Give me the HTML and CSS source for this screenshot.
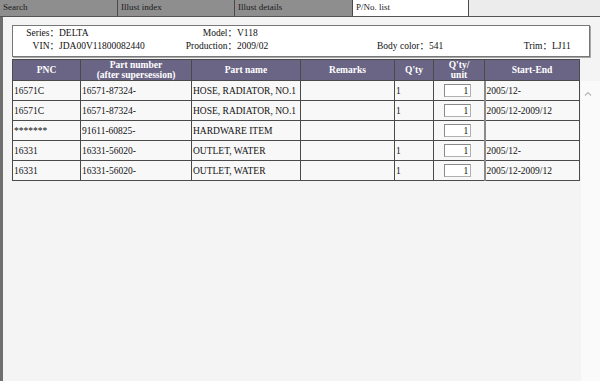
FILE: index.html
```html
<!DOCTYPE html>
<html lang="en">

<head>
    <meta charset="UTF-8">
    <meta name="viewport" content="width=device-width, initial-scale=1.0">
    <title>P/No. list</title>
    <link rel="stylesheet" href="styles.css">
</head>

<body>
    <!-- Tabs -->
    <div class="tabs">
        <div class="tab">Search</div>
        <div class="tab">Illust index</div>
        <div class="tab">Illust details</div>
        <div class="tab active">P/No. list</div>
        <div class="tab-rest"></div>
    </div>

    <div class="window">
        <!-- Vehicle info -->
        <div class="info">
            <span class="lbl">Series：</span><span class="val">DELTA</span>
            <span class="lbl">Model：</span><span class="val">V118</span>
            <span class="lbl"></span><span class="val"></span>
            <span class="lbl"></span><span class="val"></span>

            <span class="lbl">VIN：</span><span class="val">JDA00V11800082440</span>
            <span class="lbl">Production：</span><span class="val">2009/02</span>
            <span class="lbl">Body color：</span><span class="val">541</span>
            <span class="lbl">Trim：</span><span class="val">LJ11</span>
        </div>

        <!-- Parts list header -->
        <table class="parts parts-head">
            <colgroup>
                <col class="c-pnc"><col class="c-pno"><col class="c-name"><col class="c-rem">
                <col class="c-qty"><col class="c-unit"><col class="c-date">
            </colgroup>
            <thead>
                <tr>
                    <th>PNC</th>
                    <th>Part number<br>(after supersession)</th>
                    <th>Part name</th>
                    <th>Remarks</th>
                    <th>Q'ty</th>
                    <th>Q'ty/<br>unit</th>
                    <th>Start-End</th>
                </tr>
            </thead>
        </table>

        <!-- Parts list rows -->
        <div class="list-body">
            <table class="parts parts-rows">
                <colgroup>
                    <col class="c-pnc"><col class="c-pno"><col class="c-name"><col class="c-rem">
                    <col class="c-qty"><col class="c-unit"><col class="c-date">
                </colgroup>
                <tbody id="partsList">
                    <!-- filled by script below -->
                </tbody>
            </table>
            <div class="scrollbar">
                <svg class="arrow-up" width="8" height="5" viewBox="0 0 8 5">
                    <polyline points="1,4.5 4,1.5 7,4.5" fill="none" stroke="#b5b5b5" stroke-width="1.2"/>
                </svg>
            </div>
        </div>
    </div>

    <script>
        const parts = [
            { pnc: "16571C", pno: "16571-87324-", name: "HOSE, RADIATOR, NO.1", remarks: "", qty: "1", unit: "1", date: "2005/12-" },
            { pnc: "16571C", pno: "16571-87324-", name: "HOSE, RADIATOR, NO.1", remarks: "", qty: "1", unit: "1", date: "2005/12-2009/12" },
            { pnc: "*******", pno: "91611-60825-", name: "HARDWARE ITEM", remarks: "", qty: "", unit: "1", date: "" },
            { pnc: "16331", pno: "16331-56020-", name: "OUTLET, WATER", remarks: "", qty: "1", unit: "1", date: "2005/12-" },
            { pnc: "16331", pno: "16331-56020-", name: "OUTLET, WATER", remarks: "", qty: "1", unit: "1", date: "2005/12-2009/12" }
        ];

        const partsList = document.getElementById('partsList');

        parts.forEach(p => {
            const row = document.createElement('tr');
            row.innerHTML = `
                <td>${p.pnc}</td>
                <td>${p.pno}</td>
                <td>${p.name}</td>
                <td>${p.remarks}</td>
                <td>${p.qty}</td>
                <td class="unit"><input type="text" class="unit-input" value="${p.unit}"></td>
                <td>${p.date}</td>
            `;
            partsList.appendChild(row);
        });
    </script>
</body>

</html>
```

FILE: styles.css
```css
html,
body {
    margin: 0;
    height: 100%;
    overflow: hidden;
}

body {
    font-family: "Liberation Serif", "Noto Sans CJK SC", serif;
    font-size: 9.5px;
    color: #111;
    background-color: #f4f4f4;
    display: flex;
    flex-direction: column;
}

/* Tabs */
.tabs {
    display: flex;
    height: 17px;
    border-bottom: 1px solid #555;
    box-sizing: border-box;
    background-color: #ececec;
}

.tab {
    box-sizing: border-box;
    width: 117px;
    padding: 2px 0 0 3px;
    background-color: #8e8e8e;
    border-right: 1px solid #4a4a4a;
    font-size: 9px;
    color: #1a1a1a;
}

.tab:nth-child(1),
.tab:nth-child(3) {
    width: 118px;
}

.tab.active {
    width: 116px;
    background-color: #fff;
}

.tab-rest {
    flex: 1;
}

/* Window */
.window {
    flex: 1;
    display: flex;
    flex-direction: column;
    border-left: 3px solid #6e6e6e;
    padding-left: 9px;
    min-height: 0;
}

/* Vehicle info */
.info {
    margin-top: 8px;
    width: 578px;
    box-sizing: border-box;
    padding: 1px 0 3px;
    background-color: #fff;
    border: 1px solid #777;
    box-shadow: 1px 1px 0 #a8a8a8;
    display: grid;
    grid-template-columns: 46px 110px 68px 121px 71px 60px 63px 1fr;
    line-height: 13px;
    white-space: nowrap;
}

.info .lbl {
    text-align: right;
}

/* Parts table */
.parts {
    width: 568px;
    border-collapse: collapse;
    table-layout: fixed;
    background-color: #f8f8f8;
}

.c-pnc { width: 68px; }
.c-pno { width: 111px; }
.c-name { width: 109px; }
.c-rem { width: 94px; }
.c-qty { width: 39px; }
.c-unit { width: 51px; }
.c-date { width: 95px; }

.parts-head {
    margin-top: 2px;
}

.parts th {
    height: 20px;
    padding: 0;
    background-color: #6b6585;
    color: #fff;
    font-weight: bold;
    line-height: 10px;
    border: 1px solid #4a4a4a;
}

.parts td {
    height: 19px;
    padding: 0 0 0 1px;
    border: 1px solid #4a4a4a;
    white-space: nowrap;
    overflow: hidden;
}

.parts-rows tr:first-child td {
    border-top: none;
}

.parts td.unit {
    text-align: center;
    padding: 0;
    border-right: 2px solid #8a8a8a;
}

.unit-input {
    box-sizing: border-box;
    width: 27px;
    height: 13px;
    margin: 0 2px 0 0;
    padding: 0 2px 0 0;
    border: 1px solid #b0b0b0;
    border-top-color: #8a8a8a;
    border-left-color: #8a8a8a;
    background-color: #fff;
    font-family: "Liberation Serif", serif;
    font-size: 9.5px;
    text-align: right;
    color: #111;
    vertical-align: middle;
}

/* List body with scrollbar */
.list-body {
    flex: 1;
    display: flex;
    align-items: flex-start;
    gap: 1px;
}

.scrollbar {
    align-self: stretch;
    flex: 1;
    background-color: #fafafa;
    padding: 10px 0 0 3px;
}

.arrow-up {
    display: block;
}
```
